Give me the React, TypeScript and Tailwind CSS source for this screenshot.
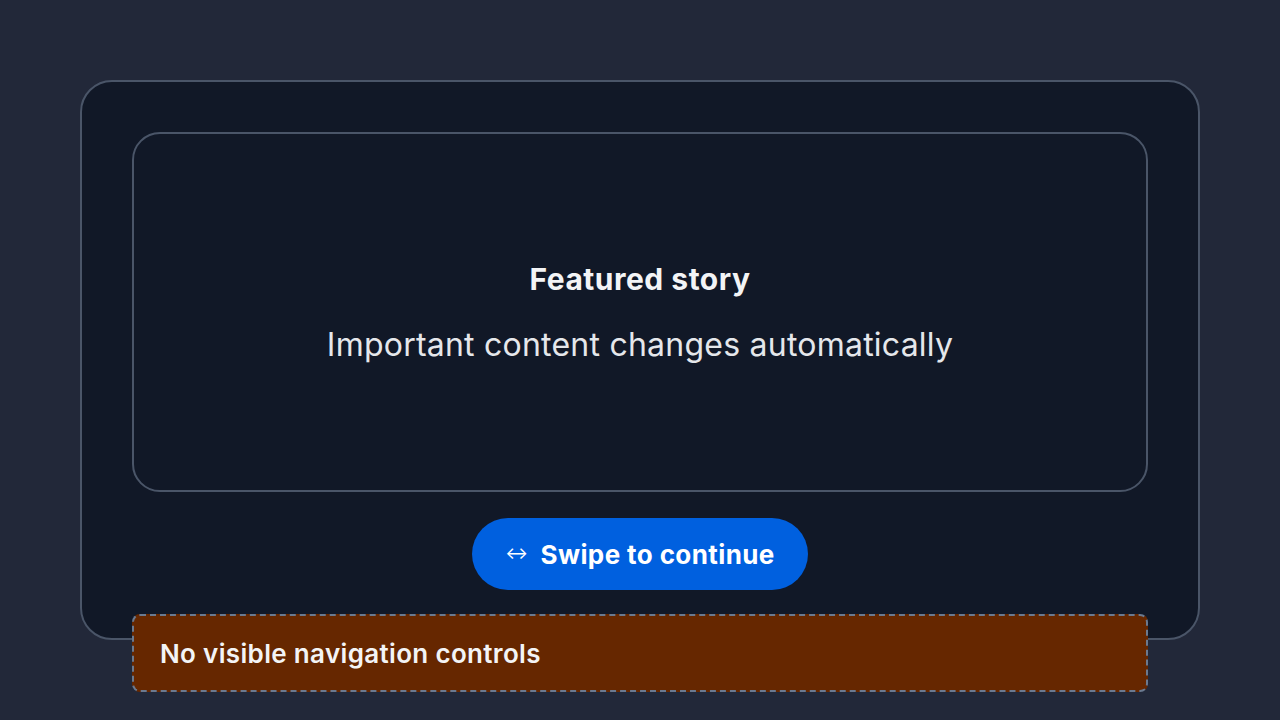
export default function App() {
  return (
    <div className="min-h-[720px] bg-[#222839] px-20 pt-20 font-['Inter',sans-serif] text-[#f3f4f6]">
      <div className="h-[560px] rounded-[32px] border-2 border-[#4a5568] bg-[#111827] p-[50px]">
        <div className="flex h-[360px] flex-col items-center justify-center rounded-[28px] border-2 border-[#4a5568] text-center">
          <h2 className="text-[30px] font-bold leading-[40px] tracking-[0.5px]">Featured story</h2>
          <p className="mt-[26px] text-[32px] leading-[40px] tracking-[0.23px] text-[#e5e7eb]">
            Important content changes automatically
          </p>
        </div>
        <div className="mt-[26px] flex justify-center">
          <button className="flex h-[72px] items-center gap-3 rounded-full bg-[#0060df] px-[33px] text-[26px] font-bold tracking-[0.4px] text-white">
            <span className="text-[17px] font-normal">↔</span>
            Swipe to continue
          </button>
        </div>
        <div className="relative mt-6 flex h-[78px] items-center rounded-lg border-2 border-dashed border-[#6b7a90] bg-[#662700] px-[26px] text-[26px] font-semibold tracking-[0.33px]">
          No visible navigation controls
        </div>
      </div>
    </div>
  );
}
